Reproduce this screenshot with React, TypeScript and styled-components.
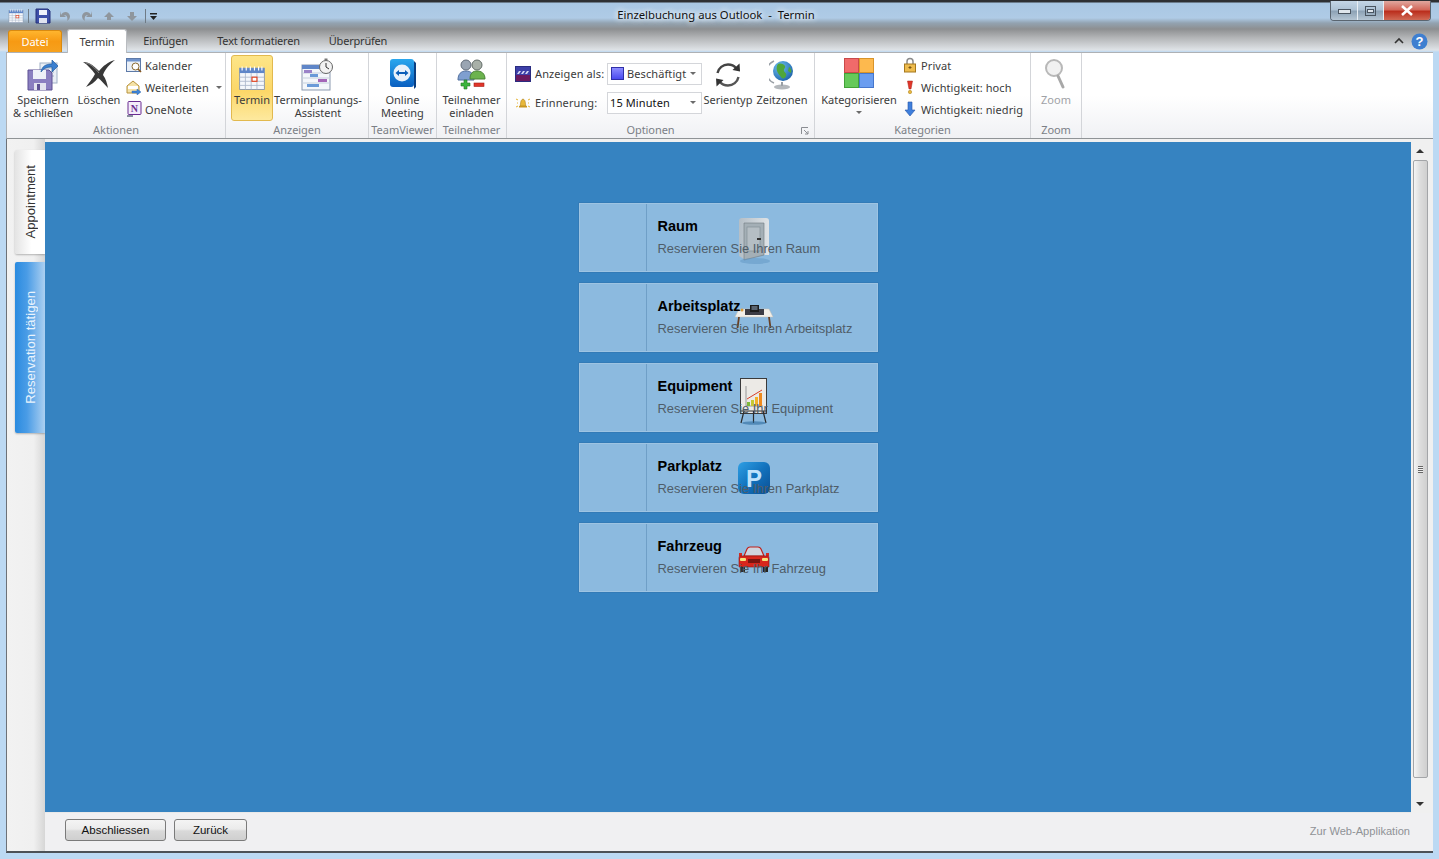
import React from 'react'
import styled, { createGlobalStyle } from 'styled-components'

const Global = createGlobalStyle`
  html, body { margin: 0; padding: 0; height: 100%; overflow: hidden; }
  #root { height: 100%; }
`

const Frame = styled.div`
  width: 1439px;
  height: 859px;
  box-sizing: border-box;
  display: flex;
  flex-direction: column;
  padding: 2px 6px 6px;
  font-family: "Noto Sans", "Open Sans", sans-serif;
  font-size: 11px;
  color: #3b3b3b;
  background:
    linear-gradient(180deg, #2e3033 0, #2e3033 2px, #a9c7e3 3px, #afcbe6 18px, #93a3b1 23px, #8d8f91 29px, #b4b6b8 38px, #dfe3e7 50px, transparent 52px),
    #bcd9f3;
`

const TitleBar = styled.div`
  height: 27px;
  display: grid;
  grid-template-columns: 1fr auto 1fr;
  align-items: start;
  flex: none;
`

const Qat = styled.div`
  display: flex;
  align-items: center;
  height: 22px;
  margin: 3px 0 0 2px;
`

const QatItem = styled.span<{ $ml: number }>`
  margin-left: ${p => p.$ml}px;
  display: flex;
`

const QatSep = styled.span<{ $ml: number }>`
  width: 1px;
  height: 14px;
  background: #6f7b86;
  margin-left: ${p => p.$ml}px;
`

const WindowTitle = styled.div`
  font-size: 11.3px;
  line-height: 14px;
  margin: 6px 0 0 -7px;
  color: #111;
  white-space: pre;
  text-shadow: 0 0 6px #fff, 0 0 6px #fff;
`

const Caption = styled.div`
  justify-self: end;
  display: flex;
  height: 19px;
  margin: -1px 2px 0 0;
  border: 1px solid #5a6570;
  border-top: none;
  border-radius: 0 0 4px 4px;
  overflow: hidden;
`

const CaptionButton = styled.div<{ $w: number; $close?: boolean }>`
  width: ${p => p.$w}px;
  display: grid;
  place-items: center;
  border-left: 1px solid #e8eef3;
  background: ${p => p.$close
    ? 'linear-gradient(180deg, #e0a79e 0, #d3695b 45%, #bb2f1e 55%, #d06a55 100%)'
    : 'linear-gradient(180deg, #c4d6e6 0, #aec2d4 45%, #8ea3b6 55%, #b5c6d4 100%)'};
  &:first-child { border-left: none; }
`

const TabRow = styled.div`
  height: 23px;
  flex: none;
  display: flex;
  align-items: flex-end;
  padding-left: 2px;
  position: relative;
`

const FileTab = styled.div`
  width: 54px;
  height: 22px;
  box-sizing: border-box;
  display: grid;
  place-items: center;
  padding-bottom: 1px;
  color: #fff;
  border-radius: 3px 3px 0 0;
  border: 1px solid #d98a10;
  border-bottom: none;
  background: linear-gradient(180deg, #ffb52e 0, #f79a13 50%, #f6a11e 100%);
`

const Tab = styled.div<{ $active?: boolean; $w: number }>`
  width: ${p => p.$w}px;
  height: ${p => p.$active ? 24 : 22}px;
  box-sizing: border-box;
  display: grid;
  place-items: center;
  padding-bottom: 1px;
  margin-bottom: ${p => p.$active ? -1 : 0}px;
  letter-spacing: -0.2px;
  color: ${p => p.$active ? '#3b3b3b' : '#333'};
  ${p => p.$active ? `
    background: #fff;
    border: 1px solid #b9bcc0;
    border-bottom: none;
    border-radius: 3px 3px 0 0;
    z-index: 1;
  ` : ''}
`

const TabSpacer = styled.div<{ $w: number }>`
  width: ${p => p.$w}px;
`

const TabRight = styled.div`
  margin-left: auto;
  display: flex;
  align-items: center;
  gap: 7px;
  height: 22px;
  padding-right: 5px;
`

const Ribbon = styled.div`
  height: 87px;
  flex: none;
  display: flex;
  box-sizing: border-box;
  border-top: 1px solid #aeb1b5;
  border-left: 1px solid #aeb1b5;
  border-bottom: 1px solid #8f9396;
  background: linear-gradient(180deg, #fff 0, #fff 50%, #f0f1f4 100%);
`

const Group = styled.div<{ $w: number }>`
  width: ${p => p.$w}px;
  flex: none;
  box-sizing: border-box;
  display: flex;
  flex-direction: column;
  position: relative;
  border-right: 1px solid #d3d5d9;
`

const GroupBody = styled.div<{ $pl?: number; $gap?: number }>`
  height: 70px;
  display: flex;
  padding-left: ${p => p.$pl ?? 0}px;
  gap: ${p => p.$gap ?? 0}px;
`

const GroupLabel = styled.div<{ $pr?: number }>`
  height: 13px;
  line-height: 13px;
  text-align: center;
  color: #7b7f86;
  padding-right: ${p => p.$pr ?? 0}px;
  letter-spacing: -0.05px;
`

const Launcher = styled.svg`
  position: absolute;
  right: 5px;
  bottom: 3px;
`

const LargeButton = styled.div<{ $w: number; $on?: boolean; $off?: boolean }>`
  width: ${p => p.$w}px;
  height: 66px;
  margin-top: 2px;
  box-sizing: border-box;
  display: flex;
  flex-direction: column;
  align-items: center;
  padding-top: 3px;
  flex: none;
  line-height: 13px;
  text-align: center;
  white-space: nowrap;
  color: ${p => p.$off ? '#a0a2a6' : '#3b3b3b'};
  ${p => p.$on ? `
    background: linear-gradient(180deg, #fde588 0, #fcd768 55%, #fde99e 100%);
    border: 1px solid #e2b94e;
    border-radius: 3px;
    padding-top: 2px;
  ` : ''}
`

const LargeIcon = styled.div<{ $pt?: number }>`
  height: 35px;
  box-sizing: border-box;
  padding-top: ${p => p.$pt ?? 0}px;
  flex: none;
  display: flex;
  align-items: flex-start;
  justify-content: center;
`

const SmallColumn = styled.div`
  display: flex;
  flex-direction: column;
  margin-top: 1px;
  padding-left: 1px;
`

const SmallRow = styled.div`
  height: 22px;
  display: flex;
  align-items: center;
  gap: 3px;
  white-space: nowrap;
  letter-spacing: 0.1px;
`

const SmallIcon = styled.span`
  width: 16px;
  height: 16px;
  flex: none;
  display: block;
  & > svg { display: block; }
`

const DropArrow = styled.span<{ $below?: boolean }>`
  width: 0;
  height: 0;
  border: 3px solid transparent;
  border-top: 3px solid #6b6b6b;
  border-bottom: none;
  margin: ${p => p.$below ? '5px 0 0' : '0 0 0 4px'};
`

const FormColumn = styled.div`
  width: 187px;
  flex: none;
  display: flex;
  flex-direction: column;
  gap: 7px;
  padding-top: 10px;
`

const FormRow = styled.div`
  display: flex;
  align-items: center;
  height: 22px;
`

const FormLabel = styled.div`
  width: 92px;
  flex: none;
  display: flex;
  align-items: center;
  gap: 4px;
  letter-spacing: 0.1px;
  white-space: nowrap;
  padding-bottom: 1px;
`

const Combo = styled.div<{ $value?: boolean }>`
  width: 95px;
  height: 22px;
  box-sizing: border-box;
  border: 1px solid #d4d6da;
  background: #fff;
  display: flex;
  align-items: center;
  gap: 3px;
  padding: 0 5px 1px 2px;
  color: ${p => p.$value ? '#111' : '#3b3b3b'};
  letter-spacing: 0.1px;
  white-space: nowrap;
  & > i { margin-left: auto; }
`

const BusySwatch = styled.span`
  width: 13px;
  height: 13px;
  margin-left: 1px;
  box-sizing: border-box;
  border: 1px solid #2f2fa8;
  background: linear-gradient(180deg, #8d8dff, #4a4af0);
`

const ComboArrow = styled.i`
  width: 0;
  height: 0;
  border: 3px solid transparent;
  border-top: 3px solid #6b6b6b;
  border-bottom: none;
`

const Main = styled.div`
  flex: 1;
  min-height: 0;
  display: flex;
  border-left: 1px solid #6d7278;
  border-bottom: 2px solid #4c5157;
  background: #f0f0f0;
`

const SideBar = styled.div`
  width: 38px;
  flex: none;
  box-sizing: border-box;
  padding: 11px 0 0 8px;
  display: flex;
  flex-direction: column;
  gap: 8px;
  background: linear-gradient(90deg, #f2f2f2 0, #f0f0f0 70%, #d6d6d6 100%);
`

const SideTab = styled.div<{ $h: number; $active?: boolean }>`
  height: ${p => p.$h}px;
  width: 30px;
  box-sizing: border-box;
  display: flex;
  align-items: center;
  justify-content: center;
  border-radius: 2px 0 0 2px;
  font-family: "Liberation Sans", Arial, sans-serif;
  font-size: 13.1px;
  color: ${p => p.$active ? '#eaf4fd' : '#333'};
  background: ${p => p.$active
    ? 'linear-gradient(90deg, #2a8be0 0, #4a9ce6 40%, #acd0f1 100%)'
    : 'linear-gradient(90deg, #e4e4e4 0, #fff 55%, #fff 100%)'};
  box-shadow: 0 1px 2px rgba(0, 0, 0, 0.25);
`

const SideTabText = styled.span`
  writing-mode: vertical-rl;
  transform: rotate(180deg);
  white-space: nowrap;
`

const Content = styled.div`
  flex: 1;
  min-width: 0;
  display: flex;
  flex-direction: column;
  padding-top: 3px;
  font-family: "Liberation Sans", Arial, sans-serif;
`

const Upper = styled.div`
  height: 671px;
  flex: none;
  display: flex;
`

const BlueArea = styled.div`
  flex: 1;
  background: #3683c1;
  display: flex;
  flex-direction: column;
  align-items: center;
  gap: 11px;
  padding: 61px 0 0;
  box-sizing: border-box;
  border-bottom: 1px solid #e9e9e9;
`

const Card = styled.div`
  width: 299px;
  height: 69px;
  flex: none;
  box-sizing: border-box;
  position: relative;
  display: flex;
  background: #8cbadf;
  border: 1px solid #9ec4e2;
  box-shadow: 0 0 0 0.5px rgba(40, 90, 140, 0.35);
`

const CardAside = styled.div`
  width: 66px;
  flex: none;
  border-right: 1px solid #6f9fc7;
`

const CardText = styled.div`
  position: relative;
  z-index: 1;
  padding: 14px 0 0 11px;
  display: flex;
  flex-direction: column;
  gap: 7px;
`

const CardTitle = styled.div`
  font-size: 14.5px;
  line-height: 16px;
  font-weight: 700;
  color: #000;
`

const CardSub = styled.div`
  font-size: 12.9px;
  line-height: 16px;
  color: #4f5d69;
  white-space: nowrap;
`

const CardIcon = styled.svg`
  position: absolute;
  left: 154px;
  top: 14px;
  width: 40px;
  height: 48px;
`

const ScrollBar = styled.div`
  width: 22px;
  flex: none;
  box-sizing: border-box;
  padding-right: 5px;
  display: flex;
  flex-direction: column;
  align-items: center;
  background: #f0f0f0;
`

const ScrollArrow = styled.div<{ $down?: boolean }>`
  height: 18px;
  flex: none;
  display: grid;
  place-items: center;
  &::before {
    content: '';
    border: 4px solid transparent;
    border-bottom: ${p => p.$down ? 'none' : '4px solid #333'};
    border-top: ${p => p.$down ? '4px solid #333' : 'none'};
  }
`

const ScrollThumb = styled.div`
  width: 15px;
  height: 618px;
  box-sizing: border-box;
  margin-left: 1px;
  border: 1px solid #a3a5a8;
  border-radius: 2px;
  background: linear-gradient(90deg, #f4f4f4, #dcdcdc 50%, #cfcfcf);
  display: grid;
  place-items: center;
`

const Grip = styled.span`
  width: 5px;
  height: 7px;
  background: repeating-linear-gradient(180deg, #666 0, #666 1px, #f0f0f0 1px, #f0f0f0 2px);
`

const ScrollGap = styled.div`
  flex: 1;
`

const Footer = styled.div`
  flex: 1;
  display: flex;
  align-items: center;
  gap: 8px;
  padding: 0 23px 5px 20px;
  background: #f0f0f2;
`

const FooterButton = styled.button<{ $w: number }>`
  width: ${p => p.$w}px;
  height: 22px;
  padding: 0;
  margin: 0;
  border: 1px solid #7a7a7a;
  border-radius: 3px;
  font-family: "Liberation Sans", Arial, sans-serif;
  font-size: 11.5px;
  color: #111;
  background: linear-gradient(180deg, #f4f4f4 0, #ebebeb 45%, #d9d9d9 55%, #cfcfcf 100%);
`

const WebLink = styled.div`
  margin-left: auto;
  font-size: 11.1px;
  padding-top: 2px;
  color: #8f9296;
`

const SaveIcon = () => (
  <svg width="34" height="34" viewBox="0 0 34 34">
    <rect x="14" y="5" width="17" height="20" fill="#e9eef5" stroke="#9fb0c6" />
    <path d="M17 10h11M17 14h11M17 18h11" stroke="#9fb0c6" />
    <path d="M2 12h21l3 3v17H2z" fill="#8a7fc0" stroke="#5d5193" />
    <rect x="7" y="12" width="13" height="9" fill="#eef0f8" />
    <rect x="8" y="25" width="12" height="7" fill="#e2e3ee" />
    <rect x="11" y="26" width="3" height="6" fill="#5d5193" />
    <path d="M15 14c1-6 5-8 11-8V2l6 6-6 6V9c-5 0-8 1-11 5z" fill="#3a7fd0" stroke="#215b9f" strokeWidth=".7" />
  </svg>
)

const DeleteIcon = () => (
  <svg width="32" height="32" viewBox="0 0 32 32">
    <path d="M0 4c7 0 12 5 16 9 4-5 9-9 16-11-5 4-10 9-12 15 3 4 4 8 5 13-4-4-7-8-10-10-3 4-7 7-12 9 3-4 7-9 9-13C9 12 5 7 0 4z" fill="#383838" />
    <path d="M3 5c5 1 9 5 13 10" stroke="#8a8a8a" fill="none" />
  </svg>
)

const CalendarIcon = ({ size = 28 }: { size?: number }) => (
  <svg width={size} height={size} viewBox="0 0 34 34">
    <rect x="2" y="5" width="30" height="26" fill="#f4f7fb" stroke="#7f8fa8" />
    <rect x="2" y="5" width="30" height="6" fill="#5f86c8" />
    <path d="M5 3v5M10 3v5M15 3v5M20 3v5M25 3v5M29 3v5" stroke="#fff" strokeWidth="1.4" />
    <path d="M2 16h30M2 21h30M2 26h30M9 11v20M16 11v20M23 11v20" stroke="#a9b6c9" />
    <rect x="17" y="16" width="6" height="5" fill="#fff" stroke="#e2401c" strokeWidth="1.4" />
  </svg>
)

const PlannerIcon = () => (
  <svg width="34" height="34" viewBox="0 0 34 34">
    <rect x="1" y="7" width="28" height="25" fill="#f4f7fb" stroke="#8b9ab0" />
    <rect x="1" y="7" width="28" height="4" fill="#5f86c8" />
    <path d="M1 15h28M1 20h28M1 25h28" stroke="#c5cfdc" />
    <rect x="3" y="12" width="8" height="3" fill="#9b82c8" />
    <rect x="9" y="16" width="8" height="3" fill="#6a9ad8" />
    <rect x="17" y="21" width="9" height="3" fill="#a466b8" />
    <rect x="6" y="26" width="12" height="3" fill="#6a9ad8" />
    <circle cx="25" cy="9" r="6.5" fill="#f2f2f2" stroke="#666" />
    <path d="M25 5v4l3 2" stroke="#333" fill="none" />
    <rect x="23.500" y="0.500" width="3" height="2" fill="#777" />
  </svg>
)

const TeamViewerIcon = () => (
  <svg width="28" height="32" viewBox="0 0 28 32">
    <defs>
      <linearGradient id="tv" x1="0" y1="0" x2="0" y2="1">
        <stop offset="0" stopColor="#2aa7ee" />
        <stop offset="1" stopColor="#0a5fc0" />
      </linearGradient>
    </defs>
    <path d="M25 3l2 2v24l-2 2z" fill="#0b3f82" />
    <rect x="1" y="1" width="24" height="28" rx="3" fill="url(#tv)" />
    <circle cx="13" cy="15" r="8.500" fill="#e9f2fb" />
    <path d="M6.500 15l3.500-3v2h6v-2l3.500 3-3.500 3v-2h-6v2z" fill="#0e5fb8" />
  </svg>
)

const PeopleIcon = () => (
  <svg width="32" height="32" viewBox="0 0 32 32">
    <circle cx="10" cy="7" r="5" fill="#9aa5b2" stroke="#626c78" />
    <path d="M2 22c0-6 3-9 8-9s8 3 8 9z" fill="#7f9fd0" stroke="#52709f" />
    <circle cx="21" cy="7" r="5" fill="#a8b0a8" stroke="#626c68" />
    <path d="M14 21c0-6 3-8 7-8s8 2 8 8z" fill="#6cb34e" stroke="#4a8436" />
    <path d="M5 25h3v-3h3v3h3v3h-3v3H8v-3H5z" fill="#3cb43c" stroke="#217a21" strokeWidth=".6" />
    <rect x="18" y="25" width="10" height="3.500" fill="#e0352a" stroke="#a41e16" strokeWidth=".6" />
  </svg>
)

const RefreshIcon = () => (
  <svg width="30" height="28" viewBox="0 0 30 28">
    <path d="M4.500 12C5.500 7 10 3.500 15 3.500c3 0 6 1 8 3.500" fill="none" stroke="#444" strokeWidth="2.400" />
    <path d="M26.500 2.500l.5 8-7.500-1.500z" fill="#333" />
    <path d="M25.500 16c-1 5-5.500 8.500-10.500 8.500-3 0-6-1-8-3.500" fill="none" stroke="#555" strokeWidth="2.400" />
    <path d="M3.500 25.500l-.5-8 7.500 1.500z" fill="#333" />
  </svg>
)

const GlobeIcon = () => (
  <svg width="26" height="32" viewBox="0 0 26 32">
    <defs>
      <radialGradient id="globe" cx="0.35" cy="0.3" r="0.8">
        <stop offset="0" stopColor="#6ec0f0" />
        <stop offset="1" stopColor="#1a5fa8" />
      </radialGradient>
    </defs>
    <path d="M5 3a12 12 0 0 0 0 22" fill="none" stroke="#9aa0a6" strokeWidth="1.500" />
    <circle cx="14" cy="13" r="10" fill="url(#globe)" />
    <path d="M9 6c3-1 6 0 7 2s-2 3-1 5 3 2 2 5-4 3-5 1-3-3-4-6 0-6 1-7zM20 9c2 1 3 4 2 6l-3-2z" fill="#4fa63a" />
    <ellipse cx="13" cy="29" rx="8" ry="2.500" fill="#b4b8bc" />
    <rect x="12" y="24" width="2" height="4" fill="#9aa0a6" />
  </svg>
)

const CategoriesIcon = () => (
  <svg width="30" height="30" viewBox="0 0 30 30">
    <rect x="0.500" y="0.500" width="14" height="14" fill="#f06a6a" stroke="#c94a4a" />
    <rect x="15.500" y="0.500" width="14" height="14" fill="#fdb94e" stroke="#d9942a" />
    <rect x="0.500" y="15.500" width="14" height="14" fill="#66c95a" stroke="#43a238" />
    <rect x="15.500" y="15.500" width="14" height="14" fill="#6a9df0" stroke="#4677cc" />
  </svg>
)

const ZoomIcon = () => (
  <svg width="24" height="32" viewBox="0 0 24 32">
    <circle cx="10" cy="10" r="8" fill="#f1f1f1" stroke="#b8b8b8" strokeWidth="2" />
    <path d="M14 18l5 11" stroke="#a8a8a8" strokeWidth="3" strokeLinecap="round" />
  </svg>
)

const SmallCalendar = () => (
  <svg width="16" height="16" viewBox="0 0 16 16">
    <rect x="0.500" y="1.500" width="14" height="13" fill="#eaf0f8" stroke="#5d7aa8" />
    <rect x="1" y="2" width="13" height="2.500" fill="#6f93cc" />
    <circle cx="9.500" cy="9.500" r="3.500" fill="#fff" stroke="#8a6a30" />
    <path d="M12 12l3 3" stroke="#8a5a20" strokeWidth="1.600" />
  </svg>
)

const ForwardMail = () => (
  <svg width="16" height="16" viewBox="0 0 16 16">
    <path d="M1 7l6-5 6 5v7H1z" fill="#f4e2a8" stroke="#b7923c" />
    <path d="M2 7h10v3H2z" fill="#fff" />
    <path d="M6 12h5v-2l4 3-4 3v-2H6z" fill="#3f86d8" stroke="#235ea8" strokeWidth=".4" />
  </svg>
)

const OneNoteIcon = () => (
  <svg width="16" height="16" viewBox="0 0 16 16">
    <rect x="2" y="0.500" width="13" height="13" rx="1" fill="#f3ecfa" stroke="#6a2c91" />
    <text x="8.500" y="11" fontSize="10" fontWeight="700" fontFamily="Liberation Serif, serif" textAnchor="middle" fill="#6a2c91">N</text>
    <path d="M1 14h6v2H1z" fill="#8a8fa0" />
  </svg>
)

const ShowAsIcon = () => (
  <svg width="16" height="16" viewBox="0 0 16 16">
    <rect x="0.500" y="0.500" width="15" height="15" fill="#3d3fa8" stroke="#2a2c80" />
    <path d="M2 8l2-3h2L4 8zm4 0l2-3h2L8 8zm4 0l2-3h2l-2 3z" fill="#d5d8f5" />
    <rect x="1" y="9" width="14" height="6" fill="#6a1a60" />
  </svg>
)

const BellIcon = () => (
  <svg width="16" height="16" viewBox="0 0 16 16">
    <path d="M5 11c1-2 0-6 3-7 3 1 2 5 3 7z" fill="#e8b83a" stroke="#a97c1a" strokeWidth=".6" />
    <rect x="4" y="11" width="8" height="1.500" fill="#c9961e" />
    <path d="M1 4l2 1M1 12l2-1M15 4l-2 1M15 12l-2-1M2 8h1M14 8h-1" stroke="#e6b432" />
  </svg>
)

const LockIcon = () => (
  <svg width="16" height="16" viewBox="0 0 16 16">
    <path d="M5 7V4.500a3 3 0 0 1 6 0V7" fill="none" stroke="#8a8a8a" strokeWidth="1.500" />
    <rect x="2.500" y="7" width="11" height="8" fill="#eebc4e" stroke="#a5781e" />
    <path d="M8 9v3M6.500 10.500h3" stroke="#7a5510" />
  </svg>
)

const HighIcon = () => (
  <svg width="16" height="16" viewBox="0 0 16 16">
    <path d="M5.500 2h5L9 10H7z" fill="#e0362a" stroke="#a81e14" strokeWidth=".5" />
    <circle cx="8" cy="13" r="1.700" fill="#e8b63a" stroke="#a97c1a" strokeWidth=".5" />
  </svg>
)

const LowIcon = () => (
  <svg width="16" height="16" viewBox="0 0 16 16">
    <path d="M6 1h4v8h3l-5 6-5-6h3z" fill="#3f7fdc" stroke="#2556a8" strokeWidth=".6" />
  </svg>
)

const DoorIcon = () => (
  <CardIcon viewBox="0 0 40 48">
    <defs>
      <linearGradient id="doorFrame" x1="0" y1="0" x2="1" y2="0">
        <stop offset="0" stopColor="#b4bec6" />
        <stop offset="1" stopColor="#dfe3e6" />
      </linearGradient>
    </defs>
    <path d="M5 38V3a3 3 0 0 1 3-3h24a3 3 0 0 1 3 3v34h-5V5H10v36z" fill="url(#doorFrame)" />
    <path d="M10 5h20v32L10 42z" fill="#a4afb6" stroke="#6f7a82" strokeWidth=".6" />
    <rect x="13" y="9" width="13" height="24" fill="#b5bec4" stroke="#7e8a92" strokeWidth=".6" />
    <rect x="23" y="20" width="4" height="2" fill="#333" />
    <ellipse cx="21" cy="43" rx="15" ry="3" fill="#5f95c3" opacity=".5" />
  </CardIcon>
)

const DeskIcon = () => (
  <CardIcon viewBox="0 0 40 48">
    <path d="M5 11h30l4 8H1z" fill="#f2efe8" stroke="#c4bfb4" strokeWidth=".5" />
    <rect x="11" y="11" width="19" height="6" fill="#3c3c44" />
    <rect x="16" y="7" width="9" height="7" fill="#1c1c1c" />
    <rect x="17.500" y="8" width="6" height="4" fill="#5a6470" />
    <path d="M5 19L3.500 30M35 19L36.500 30" stroke="#6a4022" strokeWidth="1.800" />
    <circle cx="8" cy="12" r="1.500" fill="#d89a3a" />
  </CardIcon>
)

const ChartIcon = () => (
  <CardIcon viewBox="0 0 40 48">
    <rect x="6.500" y="0.500" width="26" height="35" fill="#eceae6" stroke="#3a3a3a" />
    <path d="M12 8v20h17" stroke="#777" fill="none" strokeWidth=".7" />
    <rect x="13" y="24" width="3" height="4" fill="#7db83a" />
    <rect x="17" y="22" width="3" height="6" fill="#c6c832" />
    <rect x="21" y="19" width="3" height="9" fill="#f0b028" />
    <rect x="25" y="15" width="3" height="13" fill="#ee8a1e" />
    <path d="M13 21l15-9" stroke="#d8402a" />
    <path d="M10 33l-3 12M29 33l3 12M19.500 33v12M6 33h27" stroke="#2a2a2a" strokeWidth="1.200" />
    <ellipse cx="20" cy="45" rx="12" ry="1.800" fill="#2c6a9f" opacity=".6" />
  </CardIcon>
)

const ParkingIcon = () => (
  <CardIcon viewBox="0 0 40 48">
    <defs>
      <linearGradient id="park" x1="0" y1="0" x2="1" y2="1">
        <stop offset="0" stopColor="#2f9fe4" />
        <stop offset=".5" stopColor="#1272bd" />
        <stop offset="1" stopColor="#0a4f94" />
      </linearGradient>
    </defs>
    <rect x="4" y="4" width="32" height="32" rx="6" fill="url(#park)" />
    <text x="20" y="29" fontFamily="Liberation Sans, Arial, sans-serif" fontSize="24" fontWeight="700" textAnchor="middle" fill="#bfe2fb">P</text>
  </CardIcon>
)

const CarIcon = () => (
  <CardIcon viewBox="0 0 40 48">
    <path d="M10 18l3-7q1-2 3-2h8q2 0 3 2l3 7z" fill="#cfd4de" stroke="#c0201a" strokeWidth="1.200" />
    <path d="M5 15h3v3H5zM32 15h3v3h-3z" fill="#d42a20" />
    <path d="M6 18h28q1 0 1 2v9H5v-9q0-2 1-2z" fill="#d8261c" stroke="#8f1510" strokeWidth=".6" />
    <rect x="6" y="20" width="6" height="3" rx="1" fill="#f6e27c" />
    <rect x="28" y="20" width="6" height="3" rx="1" fill="#f6e27c" />
    <rect x="14" y="21" width="12" height="4" fill="#7a1410" />
    <rect x="6" y="29" width="5" height="5" fill="#222" />
    <rect x="29" y="29" width="5" height="5" fill="#222" />
  </CardIcon>
)

type Place = { title: string; sub: string; icon: React.ReactNode }

const places: Place[] = [
  { title: 'Raum', sub: 'Reservieren Sie Ihren Raum', icon: <DoorIcon /> },
  { title: 'Arbeitsplatz', sub: 'Reservieren Sie Ihren Arbeitsplatz', icon: <DeskIcon /> },
  { title: 'Equipment', sub: 'Reservieren Sie Ihr Equipment', icon: <ChartIcon /> },
  { title: 'Parkplatz', sub: 'Reservieren Sie Ihren Parkplatz', icon: <ParkingIcon /> },
  { title: 'Fahrzeug', sub: 'Reservieren Sie Ihr Fahrzeug', icon: <CarIcon /> },
]

export default function App() {
  return (
    <Frame>
      <Global />
      <TitleBar>
        <Qat>
          <CalendarIcon size={16} />
          <QatSep $ml={4} />
          <QatItem $ml={6}>
            <svg width="16" height="16" viewBox="0 0 16 16">
              <path d="M1 1h12l2 2v12H1z" fill="#3d4fa8" stroke="#26327a" />
              <rect x="4" y="2" width="8" height="5" fill="#eef1fa" />
              <rect x="4" y="10" width="8" height="5" fill="#dfe3f0" />
            </svg>
          </QatItem>
          <QatItem $ml={7}>
            <svg width="14" height="14" viewBox="0 0 14 14">
              <path d="M3 6c2-4 8-4 9 1 0 2-1 4-3 5 1-3 0-6-3-6L8 8H2V2z" fill="#8f969d" />
            </svg>
          </QatItem>
          <QatItem $ml={8}>
            <svg width="14" height="14" viewBox="0 0 14 14">
              <path d="M11 6C9 2 3 2 2 7c0 2 1 4 3 5-1-3 0-6 3-6L6 8h6V2z" fill="#8f969d" />
            </svg>
          </QatItem>
          <QatItem $ml={8}>
            <svg width="14" height="14" viewBox="0 0 14 14">
              <path d="M7 3l5 5H9v3H5V8H2z" fill="#8f969d" />
            </svg>
          </QatItem>
          <QatItem $ml={9}>
            <svg width="14" height="14" viewBox="0 0 14 14">
              <path d="M7 12L2 7h3V3h4v4h3z" fill="#8f969d" />
            </svg>
          </QatItem>
          <QatSep $ml={6} />
          <QatItem $ml={3}>
            <svg width="9" height="9" viewBox="0 0 9 9">
              <path d="M1 1h7v1.500H1zM1 4h7L4.500 8z" fill="#222" />
            </svg>
          </QatItem>
        </Qat>
        <WindowTitle>{'Einzelbuchung aus Outlook  -  Termin'}</WindowTitle>
        <Caption>
          <CaptionButton $w={26}>
            <svg width="13" height="6" viewBox="0 0 13 6"><rect x="0.500" y="1.500" width="12" height="4" fill="#dfe6ec" stroke="#4a5560" /></svg>
          </CaptionButton>
          <CaptionButton $w={25}>
            <svg width="11" height="10" viewBox="0 0 11 10"><rect x="0.500" y="0.500" width="10" height="9" fill="none" stroke="#4a5560" /><rect x="2.500" y="3.500" width="6" height="3" fill="#dfe6ec" stroke="#4a5560" /></svg>
          </CaptionButton>
          <CaptionButton $w={46} $close>
            <svg width="12" height="11" viewBox="0 0 12 11"><path d="M1 1l10 9M11 1L1 10" stroke="#fff" strokeWidth="2.600" /></svg>
          </CaptionButton>
        </Caption>
      </TitleBar>

      <TabRow>
        <FileTab>Datei</FileTab>
        <TabSpacer $w={5} />
        <Tab $active $w={60}>Termin</Tab>
        <Tab $w={77}>Einfügen</Tab>
        <Tab $w={109}>Text formatieren</Tab>
        <Tab $w={90}>Überprüfen</Tab>
        <TabRight>
          <svg width="10" height="8" viewBox="0 0 10 8"><path d="M1 6l4-4 4 4" fill="none" stroke="#333" strokeWidth="1.600" /></svg>
          <svg width="17" height="17" viewBox="0 0 17 17">
            <circle cx="8.500" cy="8.500" r="8" fill="#3f7fd0" />
            <text x="8.500" y="13" fontFamily="Liberation Sans, Arial, sans-serif" fontSize="13" fontWeight="700" textAnchor="middle" fill="#fff">?</text>
          </svg>
        </TabRight>
      </TabRow>

      <Ribbon>
        <Group $w={219}>
          <GroupBody $pl={6} $gap={3}>
            <LargeButton $w={60}><LargeIcon><SaveIcon /></LargeIcon>Speichern<br />&amp; schließen</LargeButton>
            <LargeButton $w={46}><LargeIcon><DeleteIcon /></LargeIcon>Löschen</LargeButton>
            <SmallColumn>
              <SmallRow><SmallIcon><SmallCalendar /></SmallIcon>Kalender</SmallRow>
              <SmallRow><SmallIcon><ForwardMail /></SmallIcon>Weiterleiten<DropArrow /></SmallRow>
              <SmallRow><SmallIcon><OneNoteIcon /></SmallIcon>OneNote</SmallRow>
            </SmallColumn>
          </GroupBody>
          <GroupLabel>Aktionen</GroupLabel>
        </Group>
        <Group $w={143}>
          <GroupBody $pl={5}>
            <LargeButton $w={42} $on><LargeIcon $pt={6}><CalendarIcon /></LargeIcon>Termin</LargeButton>
            <LargeButton $w={90}><LargeIcon><PlannerIcon /></LargeIcon>Terminplanungs-<br />Assistent</LargeButton>
          </GroupBody>
          <GroupLabel>Anzeigen</GroupLabel>
        </Group>
        <Group $w={68}>
          <GroupBody>
            <LargeButton $w={67}><LargeIcon><TeamViewerIcon /></LargeIcon>Online<br />Meeting</LargeButton>
          </GroupBody>
          <GroupLabel>TeamViewer</GroupLabel>
        </Group>
        <Group $w={70}>
          <GroupBody>
            <LargeButton $w={69}><LargeIcon><PeopleIcon /></LargeIcon>Teilnehmer<br />einladen</LargeButton>
          </GroupBody>
          <GroupLabel>Teilnehmer</GroupLabel>
        </Group>
        <Group $w={308}>
          <GroupBody $pl={8}>
            <FormColumn>
              <FormRow>
                <FormLabel><ShowAsIcon />Anzeigen als:</FormLabel>
                <Combo><BusySwatch />Beschäftigt<ComboArrow /></Combo>
              </FormRow>
              <FormRow>
                <FormLabel><BellIcon />Erinnerung:</FormLabel>
                <Combo $value>15 Minuten<ComboArrow /></Combo>
              </FormRow>
            </FormColumn>
            <LargeButton $w={52}><LargeIcon $pt={3}><RefreshIcon /></LargeIcon>Serientyp</LargeButton>
            <LargeButton $w={56}><LargeIcon><GlobeIcon /></LargeIcon>Zeitzonen</LargeButton>
          </GroupBody>
          <GroupLabel $pr={20}>Optionen</GroupLabel>
          <Launcher width="8" height="8" viewBox="0 0 8 8">
            <path d="M0.500 7V0.500H7" fill="none" stroke="#8a8d92" />
            <path d="M3 3l4 4M7 4v3H4" fill="none" stroke="#8a8d92" />
          </Launcher>
        </Group>
        <Group $w={216}>
          <GroupBody $pl={4} $gap={2}>
            <LargeButton $w={80}>
              <LargeIcon><CategoriesIcon /></LargeIcon>
              Kategorisieren
              <DropArrow $below />
            </LargeButton>
            <SmallColumn>
              <SmallRow><SmallIcon><LockIcon /></SmallIcon>Privat</SmallRow>
              <SmallRow><SmallIcon><HighIcon /></SmallIcon>Wichtigkeit: hoch</SmallRow>
              <SmallRow><SmallIcon><LowIcon /></SmallIcon>Wichtigkeit: niedrig</SmallRow>
            </SmallColumn>
          </GroupBody>
          <GroupLabel>Kategorien</GroupLabel>
        </Group>
        <Group $w={51}>
          <GroupBody>
            <LargeButton $w={50} $off><LargeIcon><ZoomIcon /></LargeIcon>Zoom</LargeButton>
          </GroupBody>
          <GroupLabel>Zoom</GroupLabel>
        </Group>
      </Ribbon>

      <Main>
        <SideBar>
          <SideTab $h={104}><SideTabText>Appointment</SideTabText></SideTab>
          <SideTab $h={171} $active><SideTabText>Reservation tätigen</SideTabText></SideTab>
        </SideBar>
        <Content>
          <Upper>
            <BlueArea>
              {places.map(p => (
                <Card key={p.title}>
                  <CardAside />
                  <CardText>
                    <CardTitle>{p.title}</CardTitle>
                    <CardSub>{p.sub}</CardSub>
                  </CardText>
                  {p.icon}
                </Card>
              ))}
            </BlueArea>
            <ScrollBar>
              <ScrollArrow />
              <ScrollThumb><Grip /></ScrollThumb>
              <ScrollGap />
              <ScrollArrow $down />
            </ScrollBar>
          </Upper>
          <Footer>
            <FooterButton $w={101}>Abschliessen</FooterButton>
            <FooterButton $w={73}>Zurück</FooterButton>
            <WebLink>Zur Web-Applikation</WebLink>
          </Footer>
        </Content>
      </Main>
    </Frame>
  )
}
